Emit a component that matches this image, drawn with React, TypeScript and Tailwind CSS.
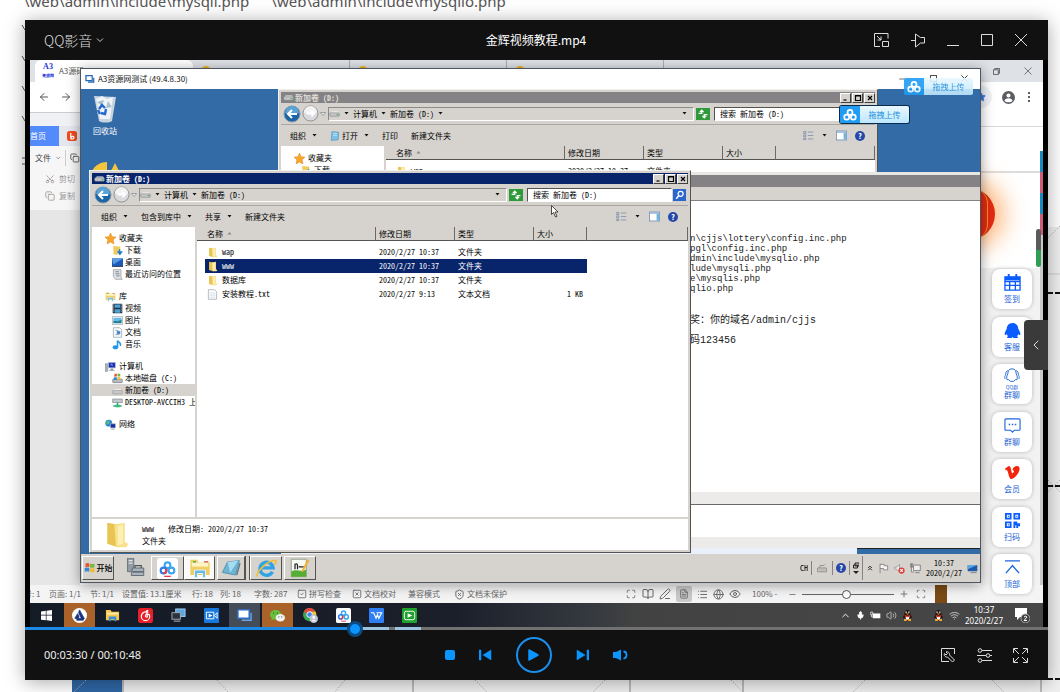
import { useState, type ReactNode } from "react";
import {
  ArrowLeft,
  ArrowRight,
  BookOpen,
  ChevronDown,
  ChevronLeft,
  ChevronUp,
  Copy,
  Eye,
  FileText,
  Globe,
  List,
  Maximize,
  Mic,
  Minus,
  PenLine,
  Plus,
  Scan,
  Scissors,
  ShieldX,
  SquareCheck,
  SquareX,
  Star,
  Volume2,
  Wifi,
} from "lucide-react";

const uiFont = "font-['Noto_Sans','Noto_Sans_CJK_SC',sans-serif]";
const cjkFont = "font-['Noto_Sans_CJK_SC',sans-serif]";
const pixelFont = "font-['Noto_Sans_Mono_CJK_SC','Noto_Sans_CJK_SC',monospace]";

type IconProps = { className?: string; children: ReactNode; box?: string };

const Icon = ({ className = "size-4", children, box = "0 0 16 16" }: IconProps) => (
  <svg viewBox={box} className={`shrink-0 ${className}`} fill="none" aria-hidden="true">
    {children}
  </svg>
);

const Caret = () => (
  <Icon className="size-[5px]" box="0 0 5 5">
    <path d="M.5 1h4L2.500 3.500z" fill="#111" />
  </Icon>
);

const FolderIcon = ({ className = "size-[10px]" }) => (
  <Icon className={className}>
    <path d="M3 1l6 1v13l-6-2z" fill="#e9c452" />
    <path d="M7 2l6-1v11l2 1-1 2H8z" fill="#f8e08c" />
    <path d="M9 3l3-1v11l-3 1z" fill="#fdf0b4" />
  </Icon>
);

const DriveIcon = ({ className = "size-[11px]" }) => (
  <Icon className={className}>
    <path d="M2 7l2-2h9l2 2z" fill="#f4f4f4" />
    <rect x="1" y="7" width="14" height="5" rx="1" fill="#c3c5c9" stroke="#777" strokeWidth=".7" />
    <rect x="11" y="9" width="3" height="1.500" fill="#4caf50" />
  </Icon>
);

const CloudLogo = ({ className = "size-[14px]", color = "#fff" }) => (
  <Icon className={className}>
    <g stroke={color} strokeWidth="2">
      <circle cx="8" cy="5" r="2.800" />
      <circle cx="4.200" cy="10.500" r="2.800" />
      <circle cx="11.800" cy="10.500" r="2.800" />
    </g>
  </Icon>
);

const CloudColor = ({ className = "size-5" }) => (
  <Icon className={className}>
    <rect width="16" height="16" rx="2" fill="#fff" />
    <g strokeWidth="1.600">
      <circle cx="8" cy="5.500" r="2.200" stroke="#3aa7f2" />
      <circle cx="5" cy="9.500" r="2.200" stroke="#2b7de9" />
      <circle cx="11" cy="9.500" r="2.200" stroke="#3ba5f0" />
      <path d="M6.800 8.200a2.200 2.200 0 0 1-2 3.400" stroke="#e8394c" />
    </g>
    <path d="M5.500 14h5" stroke="#e8394c" />
  </Icon>
);

const HelpIcon = () => (
  <span className="flex size-[10px] items-center justify-center rounded-full bg-[#2547a8] text-[8px] leading-none font-bold text-white">?</span>
);

const LibraryIcon = ({ className = "size-[11px]" }) => (
  <Icon className={className}>
    <path d="M1 2h5l1 2h8v9H1z" fill="#f1cd62" />
    <path d="M2 4h12v3H2z" fill="#fdf3c4" />
    <path d="M3 3h2v1H3z" fill="#45a747" />
    <path d="M11 3h3v1h-3z" fill="#d2574a" />
    <path d="M4 15V9.500h8V15h-2v-3H6v3z" fill="#66b9e5" stroke="#e8f6ff" strokeWidth=".7" />
  </Icon>
);

// Tree icons in the explorer's navigation pane
const treeIcons: Record<string, ReactNode> = {
  star: <path d="M8 0l2.300 5.300L16 6l-4.200 3.800L13 16l-5-3-5 3 1.200-6.200L0 6l5.700-.7z" fill="#f8a72c" stroke="#e0821c" strokeWidth=".8" />,
  download: (
    <>
      <path d="M2 1l6 1v13l-6-2zM6 2h6v11H7z" fill="#efcb5d" />
      <path d="M11 6v5M9 10l2.500 3.500 2.500-3.500z" fill="#1e7fd6" stroke="#1e7fd6" strokeWidth="2" />
    </>
  ),
  desktop: (
    <>
      <rect x="0" y="2" width="16" height="12" fill="#1c5bb8" />
      <path d="M0 2h16L2 11z" fill="#5c9be3" />
      <path d="M0 13h16v1H0z" fill="#222" />
    </>
  ),
  recent: (
    <>
      <path d="M2 1h11v11l2 3H5L2 11z" fill="#dfe3e6" stroke="#8a9399" />
      <path d="M5 4h5M5 7h6M6 10h5" stroke="#52606a" />
    </>
  ),
  video: (
    <>
      <rect x="1" y="1" width="14" height="14" rx="1" fill="#26323d" />
      <path d="M4 2h8v5H4zM4 9h8v5H4z" fill="#4aa3dc" />
      <path d="M2.500 2v12M13.500 2v12" stroke="#fff" strokeDasharray="1.500 1.500" />
    </>
  ),
  picture: (
    <>
      <rect x=".5" y="2.500" width="15" height="11" fill="#fff" stroke="#9aa8b1" />
      <path d="M2 4h12v4L8 9 2 8z" fill="#65bbe8" />
      <path d="M2 8l6 1 6-2v5H2z" fill="#227f98" />
    </>
  ),
  doc: (
    <>
      <path d="M2 1h9l3 3v11H2z" fill="#f7fafc" stroke="#8e9da8" />
      <path d="M5 5h4M5 11h6" stroke="#6e8290" />
      <path d="M7 6h5v4H7z" fill="#3f7fd0" />
    </>
  ),
  music: (
    <>
      <ellipse cx="5" cy="12" rx="4" ry="3" fill="#2196e8" />
      <path d="M8 12V2c1 3 6 3 4 8" stroke="#2196e8" strokeWidth="2.200" />
    </>
  ),
  computer: (
    <>
      <path d="M0 4h4v11H0z" fill="#aeb4bd" stroke="#737b85" strokeWidth=".7" />
      <rect x="5" y="2" width="10" height="8" fill="#1a2fb4" stroke="#b9bec8" />
      <path d="M7 4h4v4z" fill="#7893ff" />
      <path d="M8 11h4v2h2v1H6v-1h2z" fill="#8f98a3" />
    </>
  ),
  windows: (
    <>
      <rect x="1" y="9" width="14" height="5" rx="1" fill="#b7bcc2" stroke="#777" />
      <path d="M4 1h3v4H3z" fill="#e5532d" />
      <path d="M8 1h4v4H8z" fill="#7ab93c" />
      <path d="M3 6h4v4H2z" fill="#3388d8" />
      <path d="M8 6h4v4H8z" fill="#f3ba2b" />
    </>
  ),
  drive: (
    <>
      <path d="M2 8l2-2h8l2 2z" fill="#f8f8f8" />
      <rect x="1" y="8" width="14" height="5" rx="1" fill="#c6c8cc" stroke="#888" strokeWidth=".7" />
    </>
  ),
  netdrive: (
    <>
      <path d="M1 3h14v5H1z" fill="#c4c9cd" stroke="#7d848a" />
      <path d="M8 8v5M2 13h12" stroke="#23a38a" strokeWidth="2" />
      <path d="M5 11h6v4H5z" fill="#38bd6b" />
    </>
  ),
  network: (
    <>
      <circle cx="5.500" cy="6" r="5" fill="#2e87d6" />
      <path d="M3 3c3-2 5 1 3 3S3 9 2 7z" fill="#5ac06c" />
      <rect x="8" y="7" width="7" height="6" fill="#18309f" stroke="#aab1bd" />
      <path d="M9 15h5" stroke="#8a929d" />
    </>
  ),
};

const treeGroups = [
  {
    icon: "star",
    label: "收藏夹",
    items: [
      { icon: "download", label: "下载" },
      { icon: "desktop", label: "桌面" },
      { icon: "recent", label: "最近访问的位置" },
    ],
  },
  {
    icon: "library",
    label: "库",
    items: [
      { icon: "video", label: "视频" },
      { icon: "picture", label: "图片" },
      { icon: "doc", label: "文档" },
      { icon: "music", label: "音乐" },
    ],
  },
  {
    icon: "computer",
    label: "计算机",
    items: [
      { icon: "windows", label: "本地磁盘 (C:)" },
      { icon: "drive", label: "新加卷 (D:)", current: true },
      { icon: "netdrive", label: "DESKTOP-AVCCIH3 上" },
    ],
  },
  { icon: "network", label: "网络", items: [] },
];

const files = [
  { name: "wap", date: "2020/2/27 10:37", type: "文件夹", size: "" },
  { name: "www", date: "2020/2/27 10:37", type: "文件夹", size: "" },
  { name: "数据库", date: "2020/2/27 10:37", type: "文件夹", size: "" },
  { name: "安装教程.txt", date: "2020/2/27 9:13", type: "文本文档", size: "1 KB" },
];

const TreeIcon = ({ name }: { name: string }) =>
  name === "library" ? <LibraryIcon /> : <Icon className="size-[11px]">{treeIcons[name]}</Icon>;

const WindowButtons = () => (
  <div className="flex gap-px">
    {["M3 12h6", "M3 3h10v10H3zM3 4h10", "M4 4l8 8M12 4l-8 8"].map((d, i) => (
      <button
        key={d}
        aria-label={["最小化", "最大化", "关闭"][i]}
        className="flex h-[10px] w-[11px] items-center justify-center border border-t-white border-r-[#404040] border-b-[#404040] border-l-white bg-[#d6d3ce]"
      >
        <Icon className="size-2">
          <path d={d} stroke="#000" strokeWidth="2.400" />
        </Icon>
      </button>
    ))}
  </div>
);

type ExplorerProps = {
  active?: boolean;
  tools: { label: string; caret?: boolean; icon?: boolean }[];
  className: string;
  children: ReactNode;
};

const Explorer = ({ active, tools, className, children }: ExplorerProps) => (
  <section className={`absolute flex flex-col overflow-hidden border border-[#f2f0ec] border-r-[#55534f] border-b-[#55534f] bg-[#d6d3ce] p-0.5 text-[8px] leading-[12px] whitespace-nowrap text-black ${pixelFont} ${className}`}>
    <div className={`flex h-[11px] shrink-0 items-center gap-px pl-0.5 font-bold ${active ? "bg-[#08246b] text-white" : "bg-[#848284] text-[#dedbd6]"}`}>
      <DriveIcon />
      <span className="flex-1">新加卷 (D:)</span>
      <WindowButtons />
    </div>
    <div className="flex h-[22px] shrink-0 items-center gap-px border-b border-[#aaa7a2] px-0.5">
      <button aria-label="后退">
        <Icon className="size-[18px]" box="0 0 18 18">
          <circle cx="9" cy="9" r="8" fill="#1b64a5" stroke="#8799aa" />
          <path d="M2 8a7 7 0 0 1 14 0c-4 2-10 2-14 0z" fill="#5ba3d4" />
          <path d="M14 9H5M9 5L5 9l4 4" stroke="#fff" strokeWidth="2" />
        </Icon>
      </button>
      <button aria-label="前进">
        <Icon className="size-[17px]" box="0 0 18 18">
          <circle cx="9" cy="9" r="8" fill="#d9dadd" stroke="#8b8d91" />
          <path d="M2 8a7 7 0 0 1 14 0c-4 2-10 2-14 0z" fill="#f3f3f4" />
          <path d="M5 9h8M10 6l3 3-3 3" stroke="#fff" strokeWidth="2" />
        </Icon>
      </button>
      <Icon className="size-[6px]">
        <path d="M1 4h14l-7 8z" stroke="#888" strokeWidth="2" fill="#eee" />
      </Icon>
      <div className="ml-px flex h-[14px] flex-1 items-center gap-1 border border-[#8e8b87] border-r-white border-b-white pr-1">
        <DriveIcon />
        <Caret />
        <span>计算机</span>
        <Caret />
        <span>新加卷 (D:)</span>
        {!active && <Caret />}
        <span className="ml-auto flex items-center pr-0.5">
          <Caret />
        </span>
      </div>
      <button aria-label="刷新" className="mr-[3px] ml-px flex h-3 w-[14px] items-center justify-center bg-[#2f9a3a]">
        <Icon className="size-[10px]">
          <path d="M1 7h5V3M3 5l3-3 3 3M15 9h-5v4M7 11l3 3 3-3" stroke="#fff" strokeWidth="2" />
        </Icon>
      </button>
      <input
        aria-label="搜索"
        defaultValue="搜索 新加卷 (D:)"
        className="h-[14px] w-[145px] border border-[#55534f] border-r-white border-b-white bg-white pl-[5px] outline-none"
      />
      <button aria-label="开始搜索" className="flex h-3 w-[13px] items-center justify-center bg-[#2a66cc]">
        <Icon className="size-[10px]">
          <circle cx="9" cy="6" r="4" stroke="#fff" strokeWidth="2" />
          <path d="M6 9l-4 5" stroke="#fff" strokeWidth="2.500" />
        </Icon>
      </button>
    </div>
    <div className="flex h-[21px] shrink-0 items-center gap-[13px] pr-2.5 pl-[9px]">
      {tools.map((tool) => (
        <button key={tool.label} className="flex items-center gap-1.5">
          {tool.icon && (
            <Icon className="-mr-1 size-[10px]">
              <path d="M3 1l11 1-1 12-11 1z" fill="#7dc1e4" stroke="#4a8fb5" />
              <path d="M5 4h6M5 7h6" stroke="#d9f2ff" />
            </Icon>
          )}
          {tool.label}
          {tool.caret && <Caret />}
        </button>
      ))}
      <div className="ml-auto flex items-center gap-2">
        <Icon className="size-[11px]">
          <path d="M1 2h3v3H1zM1 7h3v3H1zM1 12h3v2H1zM7 3h8M7 8h8M7 13h8" stroke="#6b82a5" />
        </Icon>
        <Caret />
        <Icon className="ml-px size-[11px]">
          <rect x=".5" y="1.500" width="15" height="13" fill="#fff" stroke="#5b7da8" />
          <path d="M11 4h4v10h-4z" fill="#72b6e0" />
          <path d="M1 3h14" stroke="#8fb1d6" strokeWidth="2" />
        </Icon>
        <HelpIcon />
      </div>
    </div>
    {children}
  </section>
);

const columnHead = "h-[14px] border-b border-[#55534f] bg-[#d6d3ce] p-0 pl-[3px] text-left font-normal border-r border-r-[#6b6965]";

const FileTable = ({ rows, selected, onSelect }: { rows: typeof files; selected?: string; onSelect?: (name: string) => void }) => (
  <table className="w-full table-fixed border-separate border-spacing-0">
    <colgroup>
      <col className="w-[179px]" />
      <col className="w-[79px]" />
      <col className="w-[79px]" />
      <col className="w-[53px]" />
      <col />
    </colgroup>
    <thead>
      <tr>
        <th className={`${columnHead} pl-[10px]`}>
          <span className="flex items-center gap-1">
            名称
            <Icon className="size-[5px]" box="0 0 5 5">
              <path d="M.5 3.500h4L2.500 1z" fill="#888" />
            </Icon>
          </span>
        </th>
        <th className={columnHead}>修改日期</th>
        <th className={columnHead}>类型</th>
        <th className={columnHead}>大小</th>
        <th className={columnHead} aria-label="其他" />
      </tr>
    </thead>
    <tbody>
      <tr aria-hidden="true">
        <td className="h-1 p-0" colSpan={5} />
      </tr>
      {rows.map((file) => {
        const tint = file.name === selected ? "bg-[#08246b] text-white" : "";
        return (
          <tr key={file.name} onClick={() => onSelect?.(file.name)}>
            <td className="h-[14px] p-0 pl-2">
              <div className={`flex h-[14px] items-center gap-1 pl-0.5 ${tint}`}>
                {file.size ? (
                  <Icon className="size-[11px]">
                    <path d="M2 1h9l3 3v11H2z" fill="#fbfbfd" stroke="#9ba1ac" />
                    <path d="M4 6h8M4 9h8M4 12h8" stroke="#ccd2de" />
                  </Icon>
                ) : (
                  <FolderIcon className="size-[11px]" />
                )}
                {file.name}
              </div>
            </td>
            <td className={`p-0 pl-[3px] ${tint}`}>{file.date}</td>
            <td className={`p-0 pl-[3px] ${tint}`}>{file.type}</td>
            <td className={`p-0 pr-1 text-right ${tint}`}>{file.size}</td>
            <td className="p-0" />
          </tr>
        );
      })}
    </tbody>
  </table>
);

const FrontExplorer = () => {
  const [selected, setSelected] = useState("www");

  return (
    <Explorer
      active
      className="top-[81px] bottom-px left-2 w-[602px]"
      tools={[
        { label: "组织", caret: true },
        { label: "包含到库中", caret: true },
        { label: "共享", caret: true },
        { label: "新建文件夹" },
      ]}
    >
      <div className="flex min-h-0 flex-1 bg-white">
        <nav className="flex w-[103px] shrink-0 flex-col gap-[10px] overflow-hidden pt-[5px]">
          {treeGroups.map((group) => (
            <div key={group.label}>
              <div className="flex h-3 items-center gap-[3px] pl-[13px]">
                <TreeIcon name={group.icon} />
                {group.label}
              </div>
              {group.items.map((item) => (
                <div key={item.label} className={`flex h-3 items-center gap-[2px] pl-5 ${"current" in item ? "bg-[#d6d3ce]" : ""}`}>
                  <TreeIcon name={item.icon} />
                  {item.label}
                </div>
              ))}
            </div>
          ))}
        </nav>
        <div className="min-w-0 flex-1 border-l-2 border-[#d6d3ce]">
          <FileTable rows={files} selected={selected} onSelect={setSelected} />
        </div>
      </div>
      <div className="mt-0.5 flex h-[31px] shrink-0 items-center gap-3 bg-white pl-2.5">
        <FolderIcon className="size-7" />
        <div>
          <div className="flex gap-[14px]">
            <span>www</span>
            <span>修改日期: 2020/2/27 10:37</span>
          </div>
          <div>文件夹</div>
        </div>
      </div>
    </Explorer>
  );
};

const BackExplorer = () => (
  <Explorer
    className="top-0 right-[102px] left-[197px] h-[90px]"
    tools={[{ label: "组织", caret: true }, { label: "打开", caret: true, icon: true }, { label: "打印" }, { label: "新建文件夹" }]}
  >
    <div className="flex min-h-0 flex-1 overflow-hidden bg-white">
      <div className="w-[103px] shrink-0 pt-[6px]">
        <div className="flex h-3 items-center gap-[3px] pl-[13px]">
          <TreeIcon name="star" />
          收藏夹
        </div>
        <div className="flex h-3 items-center gap-[2px] pl-5">
          <TreeIcon name="download" />
          下载
        </div>
      </div>
      <div className="min-w-0 flex-1 border-l-2 border-[#d6d3ce]">
        <FileTable rows={files.slice(0, 1)} />
      </div>
    </div>
  </Explorer>
);

const Notepad = () => (
  <section className="absolute top-[83px] right-0 bottom-0 left-[200px] flex flex-col overflow-hidden bg-white">
    <div className="h-[3px] shrink-0 bg-[#e9e7e3]" />
    <div className="h-3 shrink-0 bg-[#848284]" />
    <div className="h-[14px] shrink-0 border-b border-[#848284] bg-[#d6d3ce]" />
    <div className="flex-1 pt-[33px] pl-[409px] text-[9px] leading-[10px] whitespace-pre text-[#222] font-['Liberation_Mono','Noto_Sans_CJK_SC',monospace]">
      {["n\\cjjs\\lottery\\config.inc.php", "pgl\\config.inc.php", "dmin\\include\\mysqlio.php", "lude\\mysqli.php", "e\\mysqlis.php", "qlio.php"].map((line) => (
        <p key={line}>{line}</p>
      ))}
      <div className="mt-[22px] space-y-[10px] text-[10px]">
        <p>奖：你的域名/admin/cjjs</p>
        <p>码123456</p>
      </div>
    </div>
    <div className="h-[13px] shrink-0 border-b border-[#6b6965] bg-[#ecebea]" />
    <div className="h-8 shrink-0" />
    <div className="h-[11px] shrink-0 bg-[#ecebea]" />
    <div className="flex h-[6px] shrink-0 bg-[#e9f0f9]">
      <div className="ml-auto w-[123px] border-t border-[#222] bg-[#336ba6]" />
    </div>
  </section>
);

const raised = "flex h-6 items-center justify-center border border-white border-r-[#55534f] border-b-[#55534f]";

const RemoteTaskbar = () => (
  <footer className={`flex h-7 shrink-0 items-center bg-[#d6d3ce] text-[8px] leading-[10px] text-black ${pixelFont}`}>
    <button className={`${raised} ml-px w-8 gap-px font-medium`}>
      <Icon className="size-3">
        <path d="M2 2c2-1 4-1 5 0v5c-2-1-3-1-5 0z" fill="#e5532d" />
        <path d="M8 2c2 1 4 1 6 0v5c-2 1-4 1-6 0z" fill="#7ab93c" />
        <path d="M1 8c2-1 4-1 6 0v5c-2-1-4-1-6 0z" fill="#3388d8" />
        <path d="M8 8c2 1 4 1 6 0v5c-2 1-4 1-6 0z" fill="#f3ba2b" />
      </Icon>
      <span className={cjkFont}>开始</span>
    </button>
    <button aria-label="服务器管理器" className="ml-[8px] mr-[3px] flex w-[26px] items-center justify-center">
      <Icon className="size-5">
        <path d="M2 0h5v11H2z" fill="#929ba3" stroke="#5c646b" strokeWidth=".6" />
        <path d="M3 2h3M3 4h3" stroke="#dfe4e8" />
        <path d="M6 8h9v6H5z" fill="#aab4bd" stroke="#5b646c" strokeWidth=".7" />
        <path d="M8 8V6h5v2M6 11h9" stroke="#4d565d" />
      </Icon>
    </button>
    <button aria-label="网盘" className={`${raised} w-[33px]`}>
      <CloudColor className="size-[21px]" />
    </button>
    <button aria-label="资源管理器" className={`${raised} w-[31px] border-[#55534f] bg-[#fafaf9]`}>
      <LibraryIcon className="size-[22px]" />
    </button>
    <button aria-label="记事本" className={`${raised} ml-0.5 w-7`}>
      <Icon className="size-[21px]">
        <path d="M5 3l9-1-3 11-10-2z" fill="#6fb4d4" stroke="#4589aa" strokeWidth=".6" />
        <path d="M5 3l8-1-6 9z" fill="#a6dcef" />
        <path d="M12 13l2.500-9" stroke="#5c7683" />
      </Icon>
    </button>
    <div className="h-6 w-[5px] border-x border-[#55534f]" />
    <button aria-label="浏览器" className={`${raised} w-8`}>
      <Icon className="size-[21px]">
        <path d="M12.500 10.500A5 5 0 1 1 13 7.500H4" stroke="#2fa3e6" strokeWidth="2.600" />
        <path d="M1 14C0 10 10 1 15 2c1 .5 0 2-1 3" stroke="#f3bd35" strokeWidth="1.300" />
      </Icon>
    </button>
    <button aria-label="编辑器" className={`${raised} ml-0.5 w-8`}>
      <Icon className="size-5">
        <path d="M1 1h12v14H1z" fill="#f8fbf4" stroke="#8c9a80" strokeWidth=".7" />
        <path d="M1 11c4-3 8 1 12-2v6H1z" fill="#55ad33" />
        <path d="M4 9V5q2-1 2 1v3M7 7h4" stroke="#222" />
        <path d="M9 11l5-10 1.500 1-5 9z" fill="#f5ae2a" />
      </Icon>
    </button>
    <div className="ml-auto flex items-center gap-[3px]">
      <span>CH</span>
      <span className="h-[14px] border-l border-[#848284]" />
      <Icon className="mx-0.5 size-[10px]">
        <path d="M1 8h14v6H1zM4 8l1-4h6l2-2" stroke="#8a8a8a" strokeWidth="1.500" />
        <path d="M3 11h10" stroke="#8a8a8a" />
      </Icon>
      <span className="h-[14px] border-l border-[#848284]" />
      <HelpIcon />
      <span className="h-[14px] border-l border-[#848284]" />
      <Icon className="h-3 w-[6px]" box="0 0 6 12">
        <path d="M2 1h4v3H2zM.5 3h4v3h-4z" stroke="#222" />
        <path d="M0 9h6l-3 3z" fill="#222" />
      </Icon>
      <div className="flex h-6 items-center gap-[5px] border-l border-[#848284] pl-1">
        <Icon className="size-[6px]">
          <path d="M3 8l5-5 5 5M3 14l5-5 5 5" stroke="#111" strokeWidth="2.400" />
        </Icon>
        <Icon className="size-[11px]">
          <path d="M3 15V1M3 2h6v2h5v6H8V8H3" stroke="#6b6b6b" fill="#f4f4f4" />
        </Icon>
        <Icon className="size-[11px]">
          <path d="M1 6h3l4-4v11L4 9H1z" fill="#eee" stroke="#888" />
          <circle cx="11" cy="11" r="4.500" fill="#df3b30" />
          <path d="M9 9l4 4M13 9l-4 4" stroke="#fff" strokeWidth="1.500" />
        </Icon>
        <Icon className="size-[11px]">
          <path d="M5 3h10v8H5zM8 14h6M2 1v12h4M1 1h3v5H1z" stroke="#737373" strokeWidth="1.200" fill="#eee" />
        </Icon>
        <time className="text-center">
          10:37
          <br />
          2020/2/27
        </time>
        <Icon className="mr-0.5 size-[11px]">
          <path d="M1 3h14v9H1z" fill="#1d5ba8" />
          <path d="M1 3h14L1 9z" fill="#5da4e0" />
          <path d="M5 14h9" stroke="#666" />
        </Icon>
      </div>
    </div>
  </footer>
);

const UploadBadge = ({ className }: { className: string }) => (
  <button className={`absolute z-20 flex h-[17px] w-[69px] items-stretch overflow-hidden rounded-[2px] text-[8px] leading-none ${cjkFont} ${className}`}>
    <span className="flex w-5 items-center justify-center bg-[#209cf4]">
      <CloudLogo />
    </span>
    <span className="flex flex-1 items-center justify-center bg-gradient-to-b from-[#e9f8ff] to-[#bde7fd] text-[#218edb]">拖拽上传</span>
  </button>
);

const RemoteDesktop = () => (
  <section className="absolute top-2 right-[62px] bottom-[44px] left-[50px] flex flex-col border border-[#4d5560] bg-[#336ba6] shadow-[0_2px_12px_rgba(0,0,0,0.4)]">
    <header className={`flex h-5 shrink-0 items-center gap-[3px] bg-white pr-3 pl-1 text-[8px] text-[#111] ${cjkFont}`}>
      <Icon className="size-[10px]">
        <path d="M1.500 2.500h10v8h-10zM5 13h9V6" stroke="#2467b5" strokeWidth="2" />
      </Icon>
      <h2 className="flex-1 whitespace-nowrap">A3资源网测试 (49.4.8.30)</h2>
      <div className="flex gap-6 text-[#222]">
        <Minus className="size-2" />
        <Icon className="size-[7px]">
          <path d="M1 1h14v14H1z" stroke="#222" strokeWidth="2" />
        </Icon>
        <Icon className="size-[7px]">
          <path d="M1 1l14 14M15 1L1 15" stroke="#222" strokeWidth="2" />
        </Icon>
      </div>
    </header>
    <UploadBadge className="top-[9px] right-[7px] opacity-90" />
    <UploadBadge className="top-[37px] right-[71px] ring-1 ring-[#0c2b4a]" />
    <div className="relative min-h-0 flex-1 overflow-hidden">
      <div className={`flex w-12 flex-col items-center gap-0.5 pt-[5px] text-[8px] leading-[12px] text-white ${cjkFont}`}>
        <Icon className="h-[29px] w-6" box="0 0 24 29">
          <path d="M1 2l22 1-4 24c-3 2-10 2-13 0z" fill="#c7d4df" />
          <path d="M3 5l6-3 5 3 6-2-3 22H7z" fill="#eef3f7" />
          <path d="M4 8l5 4 2-6zM15 7l4 6-6 1z" fill="#aabfce" />
          <path d="M6 15l3-4 3 3M13 15l-1 5-4-1M7 20l-2-4" stroke="#2268cc" strokeWidth="2.400" />
        </Icon>
        回收站
      </div>
      <Icon className="mt-[25px] ml-[11px] h-[22px] w-[27px]" box="0 0 27 22">
        <path d="M0 9C3 3 9 0 15 0v9z" fill="#f3c63c" />
        <path d="M19 9l4-8 4 8z" fill="#f3c63c" />
      </Icon>
      <BackExplorer />
      <Notepad />
      <FrontExplorer />
      <Icon className="absolute top-[116px] left-[470px] h-[13px] w-2" box="0 0 8 13">
        <path d="M.5.5v9l2-2 2 4.500 1.500-.7-2-4.300h3z" fill="#fff" stroke="#222" strokeWidth=".8" />
      </Icon>
    </div>
    <RemoteTaskbar />
  </section>
);

const sideLinks = [
  {
    label: "签到",
    art: (
      <>
        <path d="M1 3h16v14H1zM1 8h16M1 12h16M6 8v9M12 8v9" stroke="#0b5cff" strokeWidth="1.400" />
        <path d="M1 3h16v4H1zM4 0h2v4H4zM12 0h2v4h-2z" fill="#0b5cff" />
      </>
    ),
  },
  {
    label: "客服",
    art: <path d="M9 1c-4 0-6 3-6 6-1 2-3 5-2 7l2-1 1 2-1 2h5l1-1 1 1h5l-1-2 1-2 2 1c1-2-1-5-2-7 0-3-2-6-6-6z" fill="#0b5cff" />,
  },
  {
    label: "群聊",
    caption: "QQ群",
    art: (
      <path
        d="M9 1C5 1 4 4 4 7c-1 2-2 5-1 7h2l2 2h4l2-2h2c1-2 0-5-1-7 0-3-1-6-5-6zM4 3C1 4 2 7 1 9s-1 3 0 4M14 3c3 1 2 4 3 6s1 3 0 4"
        stroke="#2b6cd8"
        strokeWidth="1.200"
      />
    ),
  },
  {
    label: "群聊",
    art: (
      <>
        <path d="M2 2h14q1 0 1 1v10q0 1-1 1h-5l-2 2-2-2H2q-1 0-1-1V3q0-1 1-1z" stroke="#1b66dd" strokeWidth="1.200" />
        <path d="M5 8h1.500M8.300 8h1.500M11.500 8H13" stroke="#1b66dd" strokeWidth="1.500" />
      </>
    ),
  },
  {
    label: "会员",
    art: <path d="M1 5l4-3c3 0 2 6 4 8 2-2 2-3 0-4 1-4 5-5 7-3 2 4-3 11-8 13-3 0-3-7-5-10L2 7z" fill="#f3250d" />,
  },
  {
    label: "扫码",
    art: (
      <>
        <path d="M2 2h5v5H2zM11 2h5v5h-5zM2 11h5v5H2z" stroke="#0b5cff" strokeWidth="2" />
        <path d="M4 4h1.200v1.200H4zM13 4h1.200v1.200H13zM4 13h1.200v1.200H4zM10 10h4v2h3v3h-2v2h-2v-3h-1v3h-2z" fill="#0b5cff" />
      </>
    ),
  },
  { label: "顶部", art: <path d="M1 2h16M2 15l7-8 7 8" stroke="#1b66dd" strokeWidth="1.400" /> },
];

const SideLinks = () => (
  <nav className={`absolute top-[157px] right-[11px] flex h-[325px] w-10 flex-col justify-between text-[8px] leading-[10px] text-[#1c62d4] ${cjkFont}`}>
    {sideLinks.map((link, i) => (
      <a key={i} href="#" className="flex h-10 flex-col items-center justify-center gap-[3px] rounded-lg bg-white shadow-[0_0_4px_rgba(0,0,0,0.25)]">
        <Icon className={link.caption ? "h-[15px] w-[18px]" : "size-[17px]"} box="0 0 18 18">
          {link.art}
        </Icon>
        {link.caption && <span className="-my-[3px] text-[5px] leading-[7px]">{link.caption}</span>}
        {link.label}
      </a>
    ))}
  </nav>
);

const Browser = () => (
  <div className="flex min-h-0 flex-1 flex-col bg-white">
    <div className={`flex h-[22px] shrink-0 items-end bg-[#dee1e6] text-[8px] text-[#555] ${cjkFont}`}>
      <div className="ml-[5px] flex h-[22px] w-[158px] items-center gap-[5px] rounded-t-md bg-white pl-[7px]">
        <span className="text-center text-[8px] leading-[8px] font-bold text-[#1c36d8] font-['Liberation_Serif',serif]">
          A3
          <br />
          <span className="text-[4px] leading-[4px]">资源网</span>
        </span>
        A3源码
      </div>
      {[0, 1, 2].map((tab) => (
        <div key={tab} className="flex h-[22px] w-[157px] items-start border-r border-[#aaadb3] pl-2 pt-[6px]">
          <span className="size-[10px] rounded-full bg-[#f1b51c]" />
        </div>
      ))}
      <div className="mr-[11px] ml-auto flex h-[22px] items-center gap-6">
        <Icon className="size-[7px]">
          <path d="M1 4h11v11H1zM4 4V1h11v11h-3" stroke="#555" strokeWidth="2" />
        </Icon>
        <Icon className="size-2">
          <path d="M1 1l14 14M15 1L1 15" stroke="#777" strokeWidth="2" />
        </Icon>
      </div>
    </div>
    <div className="flex h-[30px] shrink-0 items-center gap-[10px] pr-3 pl-2 text-[#555]">
      <ArrowLeft className="size-3" />
      <ArrowRight className="size-3" />
      <span className="ml-auto flex size-[22px] items-center justify-center rounded-full bg-[#eef1f6]">
        <Star className="size-[10px] fill-[#3b76e8] text-[#3b76e8]" />
      </span>
      <Icon className="size-[13px]">
        <circle cx="8" cy="8" r="8" fill="#5a5d61" />
        <circle cx="8" cy="5.500" r="2.500" fill="#fff" />
        <path d="M3 12c2-4 8-4 10 0-2 2.500-8 2.500-10 0z" fill="#fff" />
      </Icon>
      <Icon className="ml-0.5 h-[10px] w-1" box="0 0 4 10">
        <path d="M1 0h2v2H1zM1 4h2v2H1zM1 8h2v2H1z" fill="#5a5d61" />
      </Icon>
    </div>
    <div className="relative flex min-h-0 flex-1 justify-between">
      <Writer />
      <div className="relative flex w-[63px] flex-col overflow-hidden">
        <div className="h-[15px] shrink-0 border-b border-[#d8d8d8]" />
        <div className="h-[46px] shrink-0 border-b-2 border-[#ddd]" />
        <div className="flex-1 bg-[#f2f2f2]">
          <div className="h-[95px] bg-white" />
        </div>
        <div className="absolute top-[68px] -left-[44px] size-[68px] rounded-full bg-[#ffb77c] blur-md" />
        <div className="absolute top-[76px] -left-[42px] h-[52px] w-[57px] rounded-full bg-[#e22b12]">
          <div className="ml-[18px] h-full w-8 rounded-full border-r border-[#f0962a]" />
        </div>
        <div className="absolute top-[39px] right-0 h-[84px] w-[3px] bg-[linear-gradient(#178bc0_25%,#d05a7a_25%_50%,#178bc0_50%_75%,#d05a7a_75%)]" />
        <div className="absolute top-[123px] right-0 bottom-0 w-[3px] bg-[#c9c9c9]" />
        <div className="absolute top-[117px] right-[2px] h-[38px] w-[5px] rounded-full bg-[linear-gradient(#5b5b5b_55%,#2f9d52_55%)]" />
      </div>
      <SideLinks />
    </div>
  </div>
);

const Writer = () => (
  <div className={`flex w-[50px] shrink-0 flex-col overflow-hidden bg-[#e6e6e6] text-[8px] leading-[10px] whitespace-nowrap text-[#999] ${cjkFont}`}>
    <div className="flex h-[14px] shrink-0 border-t border-[#ccc] bg-[#f0f1f4]" />
    <div className="flex h-[20px] shrink-0 items-center gap-2 bg-[#e4e7ed]">
      <span className="flex h-full w-[29px] items-center bg-[#548bfa] text-white">首页</span>
      <Icon className="size-[10px]">
        <rect width="16" height="16" rx="4" fill="#f04a1c" />
        <path d="M6 3v8c0 3 6 2 5-1S7 9 6 11" stroke="#fff" strokeWidth="2" />
      </Icon>
    </div>
    <div className="flex h-[24px] shrink-0 items-center gap-1 bg-[#f6f6f7] pl-[5px] text-[#444]">
      文件
      <ChevronDown className="size-2" />
      <span className="h-4 border-l border-[#ccc]" />
      <Copy className="size-3" />
    </div>
    <div className="flex h-[17px] shrink-0 items-center gap-1 bg-[#f6f6f7] pl-[15px]">
      <Scissors className="size-[10px] -rotate-90" />
      剪切
    </div>
    <div className="flex h-[23px] shrink-0 items-start gap-1 bg-[#f6f6f7] pt-1 pl-[15px]">
      <Copy className="size-[10px]" />
      复制
    </div>
  </div>
);

const StatusBar = () => (
  <div className={`flex h-[18px] shrink-0 items-center overflow-hidden bg-[#f4f4f5] text-[8px] whitespace-nowrap text-[#666] ${cjkFont}`}>
    <span className="-ml-1.5 w-[25px]">号: 1</span>
    <span className="w-[41px]">页面: 1/1</span>
    <span className="w-8">节: 1/1</span>
    <span className="w-[70px]">设置值: 13.1厘米</span>
    <span className="w-7">行: 18</span>
    <span className="w-[34px]">列: 18</span>
    <span className="w-[43px]">字数: 287</span>
    <span className="flex w-[55px] items-center gap-0.5">
      <SquareCheck className="size-[10px]" />
      拼写检查
    </span>
    <span className="flex w-14 items-center gap-0.5">
      <SquareX className="size-[10px]" />
      文档校对
    </span>
    <span className="w-[46px]">兼容模式</span>
    <span className="flex items-center gap-0.5">
      <ShieldX className="size-[11px]" />
      文档未保护
    </span>
    <div className="mr-[96px] ml-auto flex items-center gap-[5px]">
      <Maximize className="mr-px size-[10px]" />
      <BookOpen className="size-3" />
      <PenLine className="size-3" />
      <span className="flex size-4 items-center justify-center rounded-xs bg-[#c9c9ca]">
        <FileText className="size-[10px]" />
      </span>
      <List className="size-[11px]" />
      <Globe className="size-[11px]" />
      <Eye className="size-3" />
      <span className="ml-1.5 w-[31px]">100% -</span>
      <Minus className="size-[9px]" />
      <label className="relative flex w-[92px] items-center">
        <span className="w-full border-t border-[#666]" />
        <span className="absolute left-10 size-[9px] rounded-full border border-[#555] bg-white" />
        <input type="range" defaultValue={50} aria-label="缩放" className="absolute w-full opacity-0" />
      </label>
      <Plus className="size-[10px]" />
      <Scan className="ml-0.5 size-[10px]" />
      <span className="ml-1 h-[18px] w-3 bg-[#7a4b16]" />
    </div>
  </div>
);

const taskApps = [
  {
    name: "云盘",
    cell: "bg-[#a9622a]",
    art: (
      <>
        <circle cx="8" cy="8" r="8" fill="#fff" />
        <path d="M8 2l5 9h-3L7 5zM6 6l1.500 3L6 12 3 11zM5 13l1-2h7l-1 2z" fill="#18357e" stroke="#18357e" strokeWidth=".8" />
      </>
    ),
  },
  {
    name: "文件夹",
    art: (
      <>
        <path d="M1 2h5l1 2h8v9H1z" fill="#f7c64b" />
        <path d="M2 5h12v2H2z" fill="#fde9a9" />
        <path d="M4 14V9h8v5h-2v-2H6v2z" fill="#3a8fd9" />
      </>
    ),
  },
  {
    name: "音乐",
    art: (
      <>
        <rect width="16" height="16" rx="3" fill="#e5202b" />
        <path d="M11 4.500C9 3 3.500 4.500 3.500 9a4.500 4.500 0 0 0 9 0c0-3-4.500-3.500-4.500-.5 0 2 2.500 1.500 2 0L9 3.500c0-1 1.500-1 2-.5" stroke="#fff" strokeWidth="1.200" />
      </>
    ),
  },
  {
    name: "此电脑",
    art: (
      <>
        <rect x="5" y="1" width="10" height="8" fill="#5ea6df" stroke="#9ecdf1" />
        <rect x="1" y="5" width="9" height="7" fill="#2d333c" stroke="#a2aab5" />
        <path d="M3 14h7" stroke="#b7bec7" />
      </>
    ),
  },
  {
    name: "影音",
    art: (
      <>
        <rect width="16" height="16" rx="1" fill="#1778dd" />
        <path d="M2.500 4.500h8v7h-8zM11 8l3-3v6z" stroke="#fff" />
        <path d="M5 6l4 2-4 2z" fill="#fff" />
      </>
    ),
  },
  {
    name: "远程桌面",
    cell: "bg-[#444b59]",
    art: (
      <>
        <path d="M1 2h12v9H1z" fill="#fff" stroke="#2c6fce" strokeWidth="1.500" />
        <path d="M5 13h10V5" stroke="#6fa6e8" strokeWidth="1.500" />
      </>
    ),
  },
  {
    name: "微信",
    cell: "bg-[#a9622a]",
    art: (
      <>
        <path d="M6 2C2 2 0 5 0 7c0 2 1 3 2 4l-1 2 3-1c5 1 8-2 8-5S9 2 6 2z" fill="#66c03a" />
        <ellipse cx="11" cy="10.500" rx="5" ry="4" fill="#f1f1f1" />
        <path d="M4 5v1M8 5v1M9.500 9v1M12.500 9v1" stroke="#333" />
      </>
    ),
  },
  {
    name: "Chrome",
    art: (
      <>
        <circle cx="7" cy="7" r="7" fill="#36a853" />
        <path d="M1 3.500A7 7 0 0 1 13.500 4H7a3 3 0 0 0-3 3z" fill="#e4463a" />
        <path d="M7 14a7 7 0 0 0 6.500-10H7a3 3 0 0 1 3 4z" fill="#f8c52f" />
        <circle cx="7" cy="7" r="3" fill="#4486ef" stroke="#fff" />
        <circle cx="11.500" cy="11.500" r="4.500" fill="#bcc5d1" />
        <circle cx="11.500" cy="10" r="1.500" fill="#fff" />
        <path d="M9 14q2.500-3 5 0z" fill="#fff" />
      </>
    ),
  },
  { name: "网盘", art: null },
  {
    name: "WPS",
    art: (
      <>
        <rect width="16" height="16" rx="1" fill="#2d7ef2" />
        <path d="M2 5h3l2.500 6L9 7l1.500 4L13.500 5H8" stroke="#fff" strokeWidth="1.200" />
      </>
    ),
  },
  {
    name: "录屏",
    art: (
      <>
        <rect width="16" height="16" rx="1" fill="#1fa12d" />
        <rect x="2.500" y="3.500" width="11" height="9" rx="2" stroke="#fff" />
        <path d="M6 5.500l5 2.500-5 2.500z" fill="#fff" />
      </>
    ),
  },
];

const PenguinIcon = () => (
  <Icon className="size-[11px]">
    <path d="M8 0c-4 0-5 4-4 6-2 2-3 6-2 6l2-1 1 4h6l1-4 2 1c1 0 0-4-2-6 1-2 0-6-4-6z" fill="#1a1210" />
    <path d="M5 9h6l-1 5H6zM5 2h2v2H5zM9 2h2v2H9z" fill="#fff" />
    <path d="M4 7c3 2 5 2 8 0v2c-3 2-5 2-8 0z" fill="#e4342c" />
    <path d="M3 13h4v3H3zM9 13h4v3H9zM5 5h6l-3 2z" fill="#f5a623" />
  </Icon>
);

const HostTaskbar = () => (
  <div className={`flex h-6 shrink-0 items-center bg-[linear-gradient(90deg,#131b27_0%,#1b1f2a_42%,#34393f_55%,#424242_60%,#474747_100%)] text-[8px] leading-[11px] text-white ${uiFont}`}>
    <button aria-label="开始" className="flex w-[33px] justify-center">
      <Icon className="size-[11px]">
        <path d="M0 2l7-1v6H0zM8 1l8-1v7H8zM0 8h7v7l-7-1zM8 8h8v8l-8-1z" fill="#fff" />
      </Icon>
    </button>
    {taskApps.map((app) => (
      <button key={app.name} aria-label={app.name} className={`flex h-full w-[33px] items-center justify-center border-x border-transparent bg-clip-padding ${app.cell ?? ""}`}>
        {app.art ? <Icon className="size-[15px]">{app.art}</Icon> : <CloudColor className="size-[15px]" />}
      </button>
    ))}
    <div className="mr-[13px] ml-auto flex items-center gap-[5px]">
      <ChevronUp className="size-[11px]" />
      <Mic className="size-[9px] fill-white" />
      <Icon className="size-[11px]">
        <path d="M4 5h11v7H4z" fill="#fff" />
        <path d="M1 3h3v4H1zM2 7v3h2" stroke="#fff" />
      </Icon>
      <Volume2 className="size-[11px] text-[#bbb]" />
      <PenguinIcon />
      <span className="w-2.5" />
      <PenguinIcon />
      <Wifi className="size-[11px] text-[#ccc]" />
      <time className="text-center">
        10:37
        <br />
        2020/2/27
      </time>
      <Icon className="ml-[6px] size-4">
        <path d="M1 1h12v9H6l-3 3v-3H1z" fill="#fff" />
        <circle cx="11.500" cy="11.500" r="4.500" fill="#424242" stroke="#aaa" />
        <path d="M10 10q1.500-1.500 3 0L10 13.500h3" stroke="#fff" />
      </Icon>
    </div>
  </div>
);

const TitleBar = () => (
  <header className="relative grid h-10 shrink-0 grid-cols-[1fr_auto_1fr] items-center bg-[#111] pr-5 pl-[19px] text-[#ddd]">
    <button className={`flex items-center gap-1 text-[14px] font-light ${cjkFont}`}>
      QQ影音
      <Icon className="size-2" box="0 0 8 8">
        <path d="M1 2.500l3 3 3-3" stroke="#ccc" />
      </Icon>
    </button>
    <h1 className={`text-[12px] text-white ${cjkFont}`}>金辉视频教程.mp4</h1>
    <div className="flex items-center justify-end gap-[22px] pr-px">
      <button aria-label="迷你模式">
        <Icon className="size-[15px]" box="0 0 15 15">
          <path d="M14 5.500v-5H.5v13H6M3 3l4 4M7 3.500V7H3.500M8.500 8.500h6v5h-6z" stroke="#ddd" />
        </Icon>
      </button>
      <button aria-label="置顶">
        <Icon className="h-[15px] w-[14px]" box="0 0 14 15">
          <path d="M0 7.500h5M4.500 1v13l5-4h4V4.500h-4z" stroke="#ddd" />
        </Icon>
      </button>
      <button aria-label="最小化">
        <Icon className="h-[14px] w-3" box="0 0 12 14">
          <path d="M0 12.500h12" stroke="#ddd" />
        </Icon>
      </button>
      <button aria-label="最大化">
        <Icon className="size-3" box="0 0 12 12">
          <path d="M.5.500h11v11H.5z" stroke="#ddd" />
        </Icon>
      </button>
      <button aria-label="关闭">
        <Icon className="size-3" box="0 0 12 12">
          <path d="M0 0l12 12M12 0L0 12" stroke="#ddd" />
        </Icon>
      </button>
    </div>
  </header>
);

const Controls = () => (
  <footer className={`grid h-[50px] shrink-0 grid-cols-[1fr_auto_1fr] items-center bg-[#111] pr-5 pl-[19px] text-[11px] text-[#eee] ${uiFont}`}>
    <span>00:03:30 / 00:10:48</span>
    <div className="flex items-center gap-6">
      <button aria-label="停止" className="size-[10px] rounded-xs bg-[#0a95ff]" />
      <button aria-label="上一个">
        <Icon className="h-3 w-[13px]" box="0 0 13 12">
          <path d="M0 1h2v10H0zM12 1v10L4 6z" fill="#0a95ff" stroke="#0a95ff" strokeWidth=".5" />
        </Icon>
      </button>
      <button aria-label="播放" className="flex size-9 items-center justify-center rounded-full border-2 border-[#1b8fec]">
        <Icon className="h-3 w-[11px]" box="0 0 11 12">
          <path d="M1 1v10l9-5z" fill="#0a95ff" stroke="#0a95ff" strokeWidth="1.500" strokeLinejoin="round" />
        </Icon>
      </button>
      <button aria-label="下一个">
        <Icon className="h-3 w-[13px]" box="0 0 13 12">
          <path d="M11 1h2v10h-2zM1 1v10l8-5z" fill="#0a95ff" stroke="#0a95ff" strokeWidth=".5" />
        </Icon>
      </button>
      <button aria-label="音量">
        <Icon className="h-3 w-[15px]" box="0 0 15 12">
          <path d="M0 3h3l5-2.500v11L3 9H0z" fill="#0a95ff" />
          <path d="M10.500 2.500c4 0 4 7 0 7" stroke="#0a95ff" strokeWidth="1.800" />
        </Icon>
      </button>
    </div>
    <div className="flex items-center justify-end gap-[21px]">
      <button aria-label="工具箱">
        <Icon className="size-[15px]" box="0 0 15 15">
          <path d="M8 13.500H.5V.5h13V6" stroke="#ddd" />
          <path d="M5 4l1.500 1.500L5 7 3.500 5.500c-1 2 1 4 3 3.500l5 5 2-2-5-5c.5-2-1.500-4-3.500-3z" stroke="#ddd" />
        </Icon>
      </button>
      <button aria-label="设置">
        <Icon className="size-[15px]" box="0 0 15 15">
          <path d="M5 2.500h10M0 7.500h9M13 7.500h2M5 12.500h10" stroke="#ddd" />
          <circle cx="3" cy="2.500" r="1.800" stroke="#ddd" />
          <circle cx="11" cy="7.500" r="1.800" stroke="#ddd" />
          <circle cx="3" cy="12.500" r="1.800" stroke="#ddd" />
        </Icon>
      </button>
      <button aria-label="全屏">
        <Icon className="size-[15px]" box="0 0 15 15">
          <path d="M.5 5V.5H5M10 .5h4.500V5M14.500 10v4.500H10M5 14.500H.5V10M1 1l5 5M14 1L9 6M14 14L9 9M1 14l5-5" stroke="#ddd" />
        </Icon>
      </button>
    </div>
  </footer>
);

const Seek = () => {
  const [position, setPosition] = useState(323);

  return (
    <div className="relative flex h-[3px] shrink-0 bg-[#717171]">
      <div className="h-full bg-[#1c8ae6]" style={{ width: `${position / 10}%` }} />
      <div className="ml-1.5 w-7 bg-[#9cc4e0]" />
      <div className="ml-1.5 w-[26px] bg-[#9cc4e0]" />
      <div
        className="absolute top-1/2 z-30 size-4 -translate-x-1/2 -translate-y-1/2 rounded-full border-[3px] border-[#0c4a80] bg-[#0a95ff]"
        style={{ left: `${position / 10}%` }}
      />
      <input
        type="range"
        min={0}
        max={1000}
        value={position}
        onChange={(e) => setPosition(Number(e.target.value))}
        aria-label="播放进度"
        className="absolute inset-x-0 -top-1.5 z-30 h-4 w-full opacity-0"
      />
    </div>
  );
};

// Patterned sheet that shows around the player window
const Sheet = () => (
  <svg className="absolute inset-0 size-full" fill="none" aria-hidden="true">
    <path d="M1040 227h20v465H122v-14h918z" fill="#f0f0f0" />
    <path d="M72 676h50v16H72z" fill="#2f67a5" />
    <path d="M123 676v16M413 676v16M630 676v16M743 676v16M1041 676v16" stroke="#bbb" strokeWidth="2" />
    <path d="M217 680l11 12M345 680l-10 12M475 680l12 12M605 680l-12 12M731 680l12 12M865 680l-12 12M992 680l12 12M86 680l-12 12M1060 226l-12 12M1048 480l12 12M1060 480l-12 12" stroke="#b5b5b5" strokeDasharray="1.500 1.500" />
    <path d="M1048 274h12" stroke="#ccc" />
    <path d="M1048 293h12M1048 486h12M1048 679h12" stroke="#111" strokeWidth="2" strokeDasharray="5 2" />
    <path d="M22 25l3 5M22 56l3 5M22 86l3 5M22 116l3 5M22 158h3M22 164h3" stroke="#555" />
  </svg>
);

const App = () => (
  <div className="relative flex h-screen flex-col overflow-hidden bg-white">
    <Sheet />
    <div className={`relative flex h-5 shrink-0 items-start gap-[22px] pl-6 text-[15px] text-[#555] ${uiFont}`}>
      <p className="-mt-2.5 leading-[22px]">\web\admin\include\mysqli.php</p>
      <p className="-mt-2.5 leading-[22px]">\web\admin\include\mysqlio.php</p>
    </div>
    <main className="relative mr-3 mb-3 ml-[25px] flex min-h-0 flex-1 flex-col shadow-[0_2px_18px_rgba(0,0,0,0.35)]">
      <TitleBar />
      <div className="relative min-h-0 flex-1 bg-black px-[5px]">
        <div className="relative flex h-full flex-col overflow-hidden">
          <Browser />
          <StatusBar />
          <HostTaskbar />
          <RemoteDesktop />
        </div>
        <button aria-label="播放列表" className="absolute top-[260px] right-0 flex h-[50px] w-6 items-center justify-center rounded-l-sm bg-[#3a3a3a]">
          <ChevronLeft className="size-4 text-[#ddd]" strokeWidth={1.5} />
        </button>
      </div>
      <Seek />
      <Controls />
    </main>
  </div>
);

export default App;
